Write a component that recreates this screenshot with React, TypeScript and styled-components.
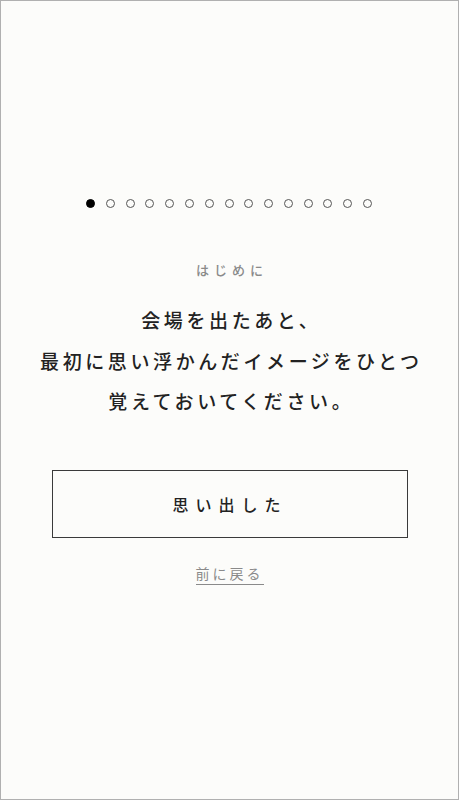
import React from "react";
import styled, { createGlobalStyle } from "styled-components";

const Global = createGlobalStyle`
  html, body { margin: 0; padding: 0; background: #fcfcfa; }
  * { box-sizing: border-box; }
`;

const Page = styled.div`
  width: 459px;
  height: 800px;
  border: 1px solid #b0b0b0;
  background: #fcfcfa;
  display: flex;
  flex-direction: column;
  align-items: center;
  padding-top: 197px;
  font-family: "Noto Sans CJK JP", "Noto Sans", sans-serif;
  color: #222;
`;

const Dots = styled.div`
  display: flex;
  gap: 10.8px;
  align-items: center;
  height: 10px;
  margin-left: -1px;
`;

const Dot = styled.span<{ $active?: boolean }>`
  width: 9px;
  height: 9px;
  border-radius: 50%;
  border: 1.5px solid ${(p) => (p.$active ? "#000" : "#555")};
  background: ${(p) => (p.$active ? "#000" : "transparent")};
`;

const Label = styled.div`
  margin-top: 52px;
  font-size: 13px;
  letter-spacing: 5px;
  margin-right: -5px;
  color: #8a8a8a;
  font-weight: 500;
  line-height: 20px;
`;

const Message = styled.p`
  margin: 20px 0 0;
  font-size: 19px;
  letter-spacing: 3.6px;
  margin-right: -3.6px;
  line-height: 40.5px;
  text-align: center;
  font-weight: 500;
  color: #222;
`;

const Button = styled.button`
  margin-top: 48px;
  width: 356px;
  height: 68px;
  border: 1px solid #3a3a3a;
  background: transparent;
  font-family: inherit;
  font-size: 16px;
  letter-spacing: 7px;
  padding-left: 7px;
  font-weight: 500;
  color: #222;
  cursor: pointer;
`;

const Back = styled.a`
  margin-top: 25px;
  font-size: 14px;
  letter-spacing: 3px;
  color: #8a8a8a;
  text-decoration: none;
  border-bottom: 1.5px solid #8a8a8a;
  line-height: 20px;
  padding-bottom: 1px;
  cursor: pointer;
`;

export default function App() {
  const total = 15;
  return (
    <>
      <Global />
      <Page>
        <Dots>
          {Array.from({ length: total }).map((_, i) => (
            <Dot key={i} $active={i === 0} />
          ))}
        </Dots>
        <Label>はじめに</Label>
        <Message>
          会場を出たあと、
          <br />
          最初に思い浮かんだイメージをひとつ
          <br />
          覚えておいてください。
        </Message>
        <Button>思い出した</Button>
        <Back>前に戻る</Back>
      </Page>
    </>
  );
}
